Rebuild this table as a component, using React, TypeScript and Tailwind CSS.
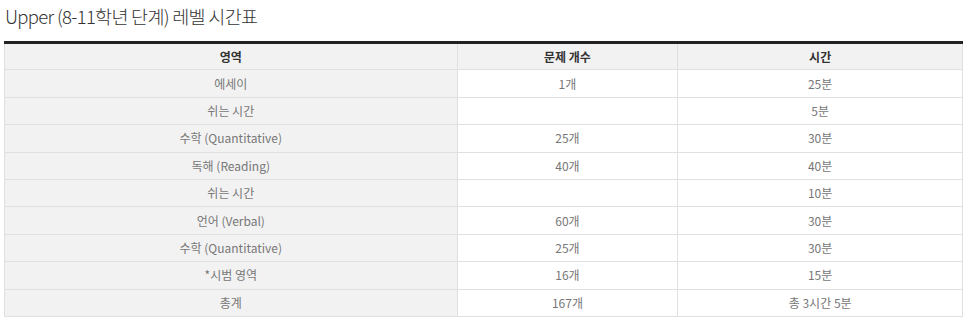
const rows = [
  { area: "에세이", count: "1개", time: "25분" },
  { area: "쉬는 시간", count: "", time: "5분" },
  { area: "수학 (Quantitative)", count: "25개", time: "30분" },
  { area: "독해 (Reading)", count: "40개", time: "40분" },
  { area: "쉬는 시간", count: "", time: "10분" },
  { area: "언어 (Verbal)", count: "60개", time: "30분" },
  { area: "수학 (Quantitative)", count: "25개", time: "30분" },
  { area: "*시범 영역", count: "16개", time: "15분" },
  { area: "총계", count: "167개", time: "총 3시간 5분" },
];

export default function App() {
  return (
    <div className="bg-white w-[966px] h-[321px] overflow-hidden font-['Noto_Sans_CJK_KR',sans-serif]">
      <h2 className="pl-[5px] pt-[3px] text-[18.5px] leading-[26px] tracking-[-0.7px] text-[#333] font-light">
        Upper (8-11학년 단계) 레벨 시간표
      </h2>
      <table className="ml-[4px] mt-[12px] w-[959px] border-collapse border-t-[3px] border-t-[#222] text-[12px] text-[#777] text-center">
        <colgroup>
          <col className="w-[453px]" />
          <col className="w-[221px]" />
          <col className="w-[285px]" />
        </colgroup>
        <thead>
          <tr className="bg-[#f2f2f2] h-[27.4px]">
            <th className="border border-[#e0e0e0] border-t-[#222] font-bold text-[#333]">영역</th>
            <th className="border border-[#e0e0e0] border-t-[#222] font-bold text-[#333]">문제 개수</th>
            <th className="border border-[#e0e0e0] border-t-[#222] font-bold text-[#333]">시간</th>
          </tr>
        </thead>
        <tbody>
          {rows.map((r, i) => (
            <tr key={i} className="h-[27.4px]">
              <td className="border border-[#e0e0e0] bg-[#f2f2f2]">{r.area}</td>
              <td className="border border-[#e0e0e0]">{r.count}</td>
              <td className="border border-[#e0e0e0]">{r.time}</td>
            </tr>
          ))}
        </tbody>
      </table>
    </div>
  );
}
